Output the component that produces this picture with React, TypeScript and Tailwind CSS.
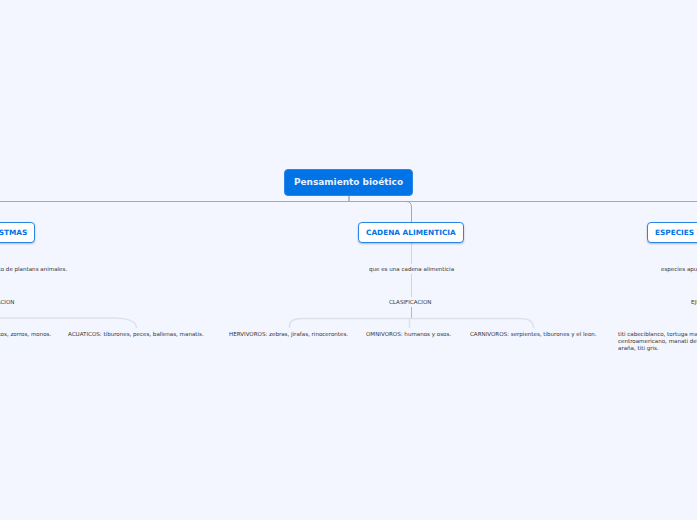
const FONT = "font-['DejaVu_Sans',Verdana,sans-serif]"

function Topic({ left, top, children }: { left: number; top: number; children: string }) {
  return (
    <div
      className={`absolute h-[21px] flex items-center px-[7px] whitespace-nowrap rounded-[4px] border-[1.5px] border-[#2b85e4] bg-white text-[7.35px] font-bold text-[#0073e6] shadow-[0_1px_2px_rgba(0,0,0,0.25)] ${FONT}`}
      style={{ left, top }}
    >
      {children}
    </div>
  )
}

function Label({ left, top, width, children }: { left: number; top: number; width?: number; children: string }) {
  return (
    <div
      className={`absolute text-[5.55px] leading-[7px] text-[#333333] ${width ? '' : 'whitespace-nowrap'} ${FONT}`}
      style={{ left, top, width }}
    >
      {children}
    </div>
  )
}

export default function App() {
  return (
    <div className="relative w-[697px] h-[520px] overflow-hidden bg-[#f3f6ff]">
      {/* Connectors */}
      <svg className="absolute inset-0" width="697" height="520" fill="none">
        <path d="M0 201.5H697" stroke="#a8a8a8" strokeWidth="1" />
        <path d="M349 196V201" stroke="#a8a8a8" strokeWidth="1.5" />
        <path d="M406 201.5Q411.5 201.5 411.5 207V222" stroke="#a8a8a8" strokeWidth="1" />
        <path d="M411.5 243V264M411.5 274V297" stroke="#d2d4dc" strokeWidth="1" />
        <path d="M411.5 307V318" stroke="#b4b6bc" strokeWidth="1" />
        <path d="M289.5 328V326Q289.5 318.5 302 318.5H520Q533.5 318.5 533.5 328" stroke="#dfe1ea" strokeWidth="1.5" />
        <path d="M409.5 319V328" stroke="#dfe1ea" strokeWidth="1.5" />
        <path d="M0 318H112Q136.5 318 136.5 328" stroke="#dfe1ea" strokeWidth="1.5" />
      </svg>

      {/* Root */}
      <div
        className={`absolute left-[284px] top-[169px] w-[129px] h-[27px] flex items-center justify-center pt-px rounded-[4px] border border-[#2b85e4] bg-[#0073e6] text-[8.95px] font-bold text-[#e8f2ff] ${FONT}`}
      >
        Pensamiento bioético
      </div>

      {/* Main topics */}
      <Topic left={-34} top={222}>ECOSISTMAS</Topic>
      <Topic left={358} top={222}>CADENA ALIMENTICIA</Topic>
      <Topic left={647} top={222}>ESPECIES APUNTO DE EXTINCION</Topic>

      {/* Left branch */}
      <Label left={-20} top={266}>conjunto de plantans animales.</Label>
      <Label left={-28} top={299}>CLASIFICACION</Label>
      <Label left={-48} top={331}>TERRESTRES: gatos, zorros, monos.</Label>
      <Label left={68} top={331}>ACUATICOS: tiburones, peces, ballenas, manatis.</Label>

      {/* Center branch */}
      <Label left={369} top={266}>que es una cadena alimenticia</Label>
      <Label left={389} top={299}>CLASIFICACION</Label>
      <Label left={229} top={331}>HERVIVOROS: zebras, jirafas, rinocerontes.</Label>
      <Label left={366} top={331}>OMNIVOROS: humanos y osos.</Label>
      <Label left={470} top={331}>CARNIVOROS: serpientes, tiburones y el leon.</Label>

      {/* Right branch */}
      <Label left={661} top={266}>especies apunto de extincion</Label>
      <Label left={691} top={299}>EJEMPLOS</Label>
      <Label left={618} top={331} width={125}>titi cabeciblanco, tortuga marina, jaguar centroamericano, manati del caribe, mono araña, titi gris.</Label>
    </div>
  )
}
